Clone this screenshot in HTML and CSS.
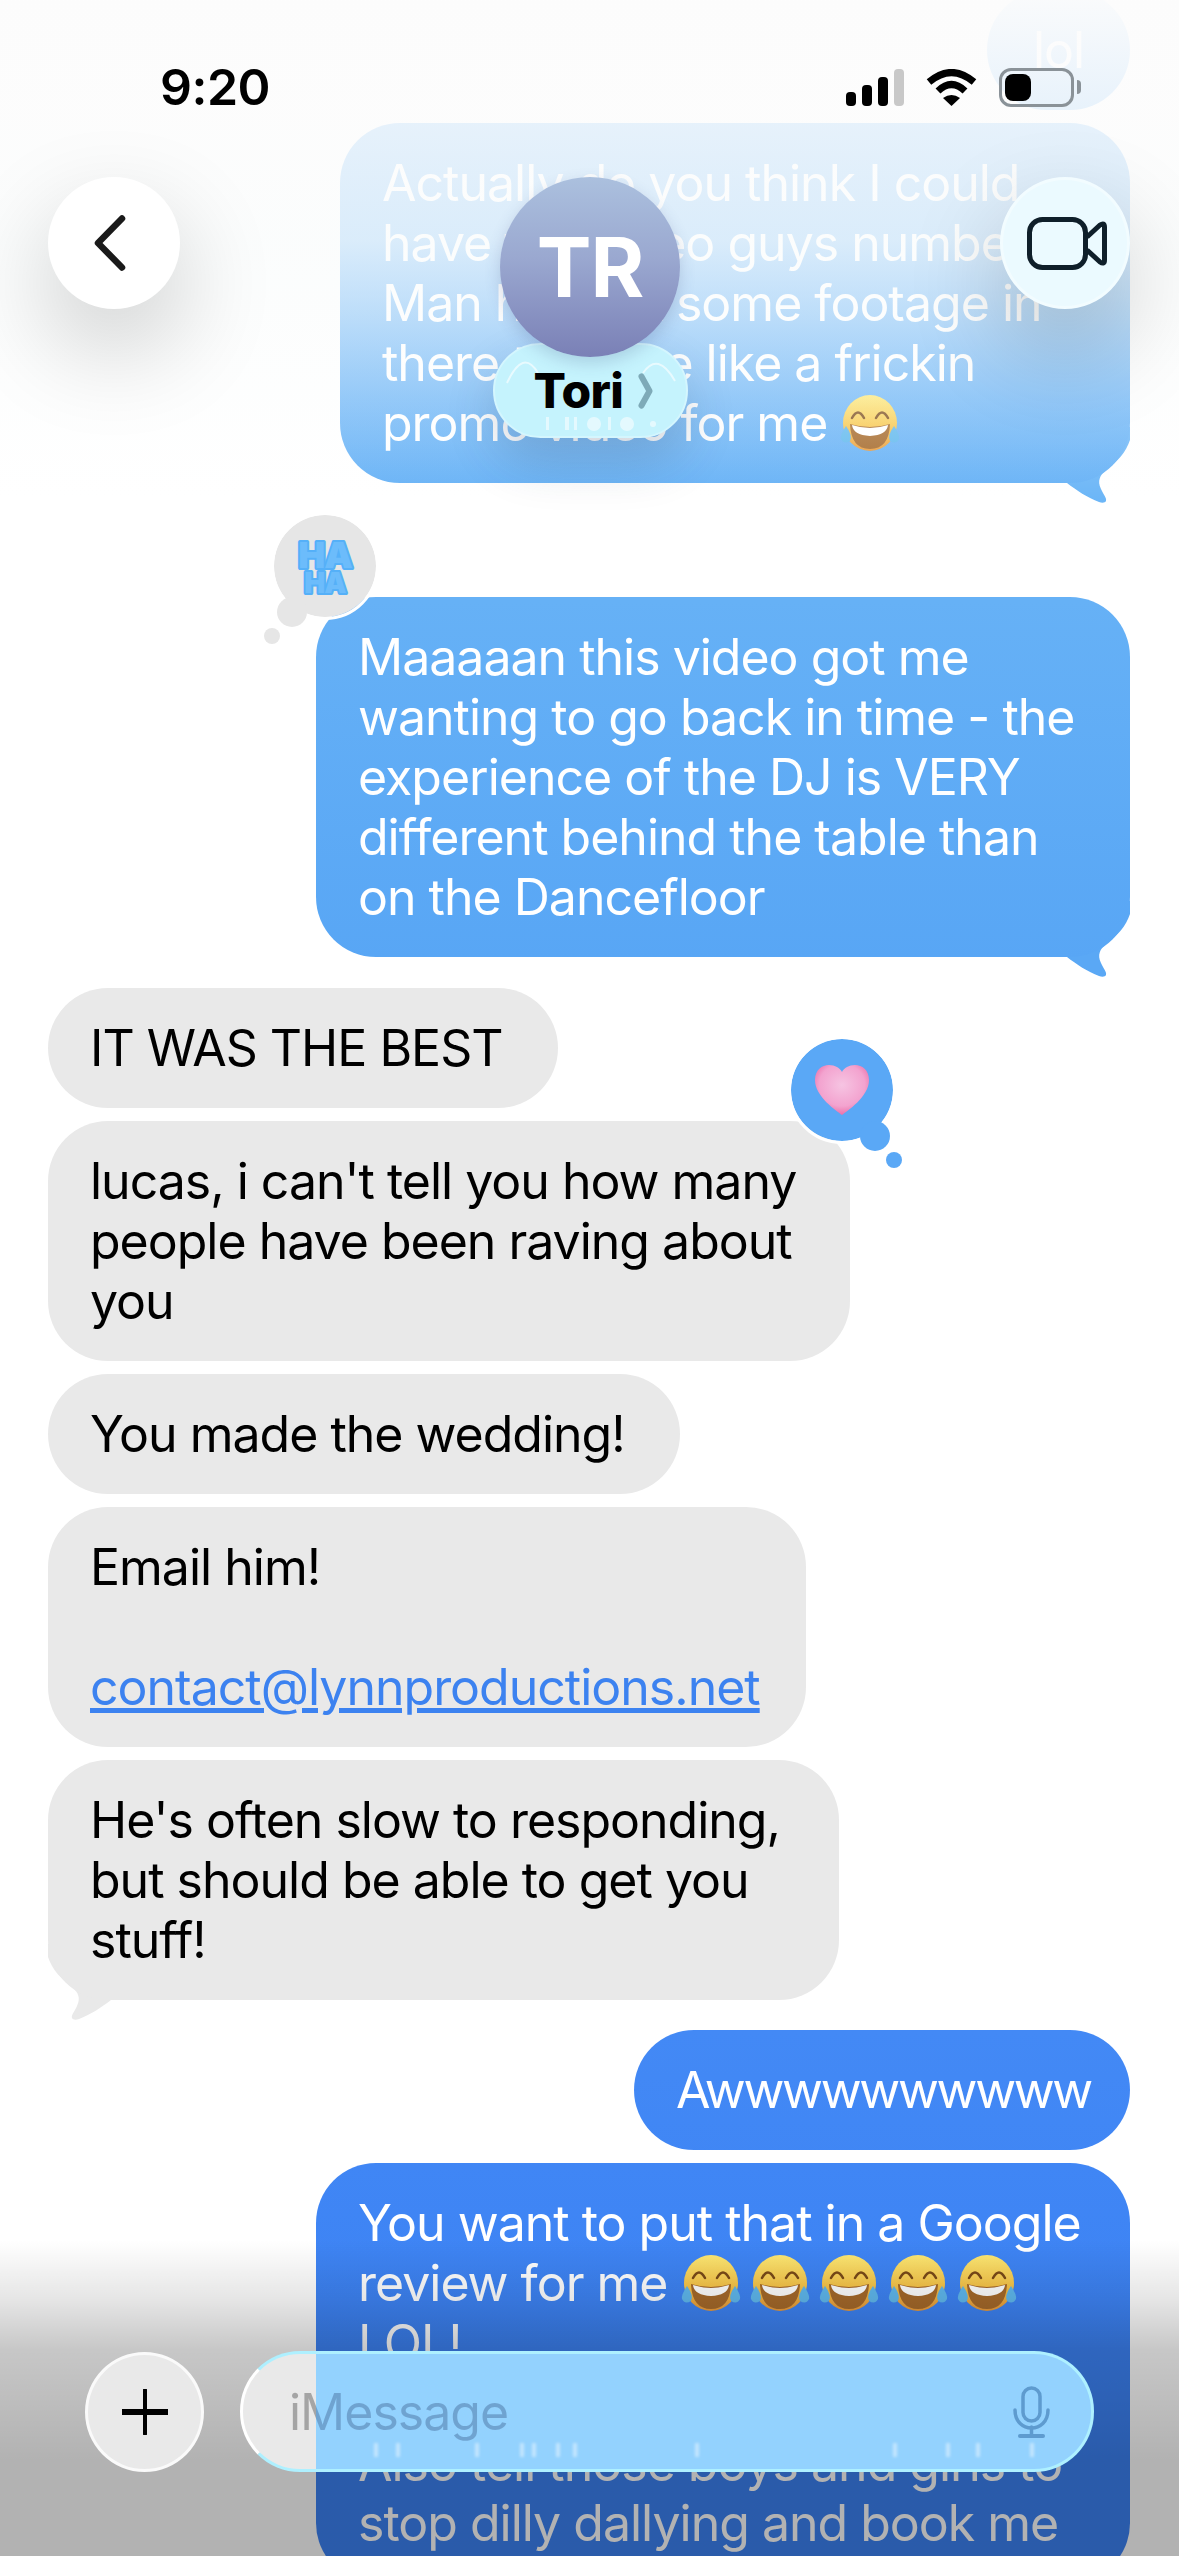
FILE: index.html
```html
<!DOCTYPE html>
<html lang="en">
<head>
    <meta charset="UTF-8">
    <meta name="viewport" content="width=device-width, initial-scale=1.0">
    <title>Tori</title>
    <link rel="stylesheet" href="styles.css">
</head>
<body>
    <svg class="defs" width="0" height="0">
        <defs>
            <linearGradient id="face" x1="0" y1="0" x2="0" y2="1">
                <stop offset="0" stop-color="#fde873"/>
                <stop offset="0.55" stop-color="#f8c64a"/>
                <stop offset="1" stop-color="#e8983a"/>
            </linearGradient>
            <radialGradient id="pink" cx="0.5" cy="0.4" r="0.65">
                <stop offset="0" stop-color="#f6c4e2"/>
                <stop offset="0.65" stop-color="#f3a3cf"/>
                <stop offset="1" stop-color="#e9619f"/>
            </radialGradient>
            <symbol id="joy" viewBox="0 0 60 58">
                <ellipse cx="30" cy="28" rx="27" ry="28" fill="url(#face)"/>
                <path d="M12 23 Q18 12 24 23 M36 23 Q42 12 48 23" fill="none" stroke="#7a4a18" stroke-width="2.500" stroke-linecap="round"/>
                <path d="M10 29 Q30 35 50 29 Q49 54 30 54 Q11 54 10 29Z" fill="#a5692a"/>
                <path d="M12 30 Q30 36 48 30 Q47 40 30 41 Q13 40 12 30Z" fill="#fff"/>
                <path d="M6 31 Q0 40 1 44 Q4 50 10 46 Q13 41 6 31Z M54 31 Q60 40 59 44 Q56 50 50 46 Q47 41 54 31Z" fill="#5fb8ee"/>
            </symbol>
            <symbol id="tail" viewBox="0 0 72 76">
                <path d="M0 0 H72 V13 C68 25 60 34 48 43 C42 48 39 54 43 62 C45 67 49 71 48 74 C47 76 44 76 41 75 C30 71 18 63 9 56 H0Z"/>
            </symbol>
        </defs>
    </svg>

    <div class="phone">
        <div class="thread">
            <div class="bubble sent lol">lol</div>

            <div class="bubble sent w790 after-gap">
                Actually do you think I could<br>
                have the video guys number<br>
                Man he shot some footage in<br>
                there to make like a frickin<br>
                promo video for me <svg class="emoji"><use href="#joy"/></svg>
                <svg class="tail tail-top"><use href="#tail"/></svg>
            </div>

            <div class="bubble sent w814">
                Maaaaan this video got me<br>
                wanting to go back in time - the<br>
                experience of the DJ is VERY<br>
                different behind the table than<br>
                on the Dancefloor
                <svg class="tail"><use href="#tail"/></svg>
                <div class="react react-haha">
                    <span class="dot-big"></span>
                    <span class="dot-small"></span>
                    <svg class="haha" viewBox="0 0 80 80">
                        <text class="haha-top" x="40" y="42" text-anchor="middle">HA</text>
                        <text class="haha-low" x="40" y="67" text-anchor="middle">HA</text>
                    </svg>
                </div>
            </div>

            <div class="bubble got w510">IT WAS THE BEST</div>

            <div class="bubble got w802">
                lucas, i can't tell you how many<br>
                people have been raving about<br>
                you
                <div class="react react-heart">
                    <span class="dot-big"></span>
                    <span class="dot-small"></span>
                    <svg class="heart" viewBox="0 0 54 50"><path d="M27 50 C22 46 0 32 0 15 C0 5 7 0 14 0 C20 0 25 3 27 7 C29 3 34 0 40 0 C47 0 54 5 54 15 C54 32 32 46 27 50Z" fill="url(#pink)"/></svg>
                </div>
            </div>

            <div class="bubble got w632">You made the wedding!</div>

            <div class="bubble got w758">
                Email him!<br>
                <br>
                <a class="mail" href="#">contact@lynnproductions.net</a>
            </div>

            <div class="bubble got w791">
                He's often slow to responding,<br>
                but should be able to get you<br>
                stuff!
                <svg class="tail tail-left"><use href="#tail"/></svg>
            </div>

            <div class="bubble sent w496 top-gap aww">Awwwwwwwwww</div>

            <div class="bubble sent w814">
                You want to put that in a Google<br>
                review for me <svg class="emoji"><use href="#joy"/></svg><svg class="emoji"><use href="#joy"/></svg><svg class="emoji"><use href="#joy"/></svg><svg class="emoji"><use href="#joy"/></svg><svg class="emoji"><use href="#joy"/></svg><br>
                LOL!<br>
                <br>
                Also tell those boys and girls to<br>
                stop dilly dallying and book me
            </div>
        </div>

        <div class="fade-top"></div>
        <div class="fade-bottom"></div>

        <div class="status">
            <span class="time">9:20</span>
            <div class="status-icons">
                <svg class="signal" viewBox="0 0 58 37">
                    <rect x="0" y="23" width="10" height="14" rx="4" fill="#000"/>
                    <rect x="16" y="16" width="10" height="21" rx="4" fill="#000"/>
                    <rect x="32" y="8" width="10" height="29" rx="4" fill="#000"/>
                    <rect x="48" y="0" width="10" height="37" rx="4" fill="#c8c8c8"/>
                </svg>
                <svg class="wifi" viewBox="0 0 51 37">
                    <path d="M3 13 Q25.5 -6 48 13" fill="none" stroke="#000" stroke-width="7"/>
                    <path d="M12 22 Q25.5 9 39 22" fill="none" stroke="#000" stroke-width="7"/>
                    <path d="M17 29 Q25.5 23 34 29 L25.5 37Z" fill="#000"/>
                </svg>
                <div class="battery"><span class="battery-fill"></span></div>
                <span class="battery-nub"></span>
            </div>
        </div>

        <div class="nav">
            <button class="round back">
                <svg class="chevron" viewBox="0 0 32 56"><path d="M28 3.500 L4 28 L28 52.500" fill="none" stroke="#1a1a1a" stroke-width="6.500" stroke-linecap="round" stroke-linejoin="round"/></svg>
            </button>
            <div class="contact">
                <div class="avatar">TR</div>
                <div class="name">
                    <svg class="glass" viewBox="0 0 195 95">
                        <path d="M14 40 Q30 5 45 30 M150 30 Q165 8 182 38" fill="none" stroke="#fff" stroke-width="2" opacity=".6"/>
                        <g fill="#fff" opacity=".55">
                            <rect x="53" y="74" width="3" height="13"/>
                            <rect x="72" y="74" width="4" height="13"/>
                            <rect x="81" y="74" width="3" height="13"/>
                            <circle cx="101" cy="81" r="7"/>
                            <rect x="115" y="74" width="3" height="13"/>
                            <circle cx="134" cy="81" r="7"/>
                            <circle cx="160" cy="81" r="3"/>
                        </g>
                    </svg>
                    <span class="name-text">Tori</span>
                    <svg class="name-arrow" viewBox="0 0 15 36"><path d="M3.500 3.500 L11.500 18 L3.500 32.500" fill="none" stroke="#7eaab8" stroke-width="6" stroke-linecap="round" stroke-linejoin="round"/></svg>
                </div>
            </div>
            <button class="round video">
                <svg class="video-icon" viewBox="0 0 80 53"><rect x="2.5" y="2.5" width="56" height="48" rx="13" fill="none" stroke="#0f1f2a" stroke-width="5"/><path d="M60 20 L73 8 Q77.500 5 77.500 10 V43 Q77.500 48 73 45 L60 33" fill="none" stroke="#0f1f2a" stroke-width="5" stroke-linejoin="round"/></svg>
            </button>
        </div>

        <div class="compose">
            <button class="plus">
                <svg class="plus-icon" viewBox="0 0 46 46"><path d="M23 1 V45" stroke="#000" stroke-width="4" stroke-linecap="round"/><path d="M1 23 H45" stroke="#000" stroke-width="6" stroke-linecap="round"/></svg>
            </button>
            <div class="input">
                <span class="placeholder">iMessage</span>
                <svg class="bits" viewBox="0 0 854 14">
                    <g fill="#fff" opacity=".45">
                        <rect x="134" width="4" height="14"/><rect x="156" width="4" height="14"/>
                        <rect x="235" width="4" height="14"/><rect x="280" width="4" height="14"/>
                        <rect x="292" width="4" height="14"/><rect x="316" width="4" height="14"/>
                        <rect x="333" width="4" height="14"/><rect x="455" width="4" height="14"/>
                        <rect x="653" width="4" height="14"/><rect x="706" width="4" height="14"/>
                        <rect x="736" width="4" height="14"/><rect x="790" width="4" height="14"/>
                    </g>
                </svg>
                <svg class="mic" viewBox="0 0 37 52" fill="none" stroke="#5e9bcf" stroke-width="3.500" stroke-linecap="round">
                    <rect x="10" y="2" width="17" height="33" rx="8.500"/>
                    <path d="M2 24 C2 48 35 48 35 24"/>
                    <path d="M18.500 41 V49"/>
                    <path d="M7 50 H30" stroke-width="4"/>
                </svg>
            </div>
        </div>
    </div>
</body>
</html>
```

FILE: styles.css
```css
* { box-sizing: border-box; }
html, body { margin: 0; padding: 0; }
body { background: #fff; font-family: Inter, "Noto Sans", sans-serif; }
.defs { position: absolute; }

.phone { position: relative; z-index: 0; width: 1179px; height: 2556px; overflow: hidden; background: #fff; }

/* messages */
.thread { display: flex; flex-direction: column; gap: 13px; margin-top: -10px; padding: 0 49px 0 48px; }
.bubble { position: relative; width: fit-content; padding: 30px 42px; border-radius: 60px; font-size: 50px; line-height: 60px; letter-spacing: -1px; white-space: nowrap; }
.sent { align-self: flex-end; color: #fff; background: linear-gradient(180deg, #6cb6f7 0, #66b1f6 600px, #58a6f5 960px, #4389f5 2030px, #3c82f4 2350px) fixed; }
.got { align-self: flex-start; color: #000; background: #e9e9e9; }
.lol { width: 143px; text-align: center; padding-left: 0; padding-right: 0; }
.aww { letter-spacing: -2.3px; }
.after-gap { margin-bottom: 101px; }
.w790 { width: 790px; }
.w814 { width: 814px; }
.w510 { width: 510px; margin-top: 18px; }
.w802 { width: 802px; }
.w632 { width: 632px; }
.w758 { width: 758px; }
.w791 { width: 791px; }
.w496 { width: 496px; }
.top-gap { margin-top: 17px; }
.mail { color: #3c82f0; }

.emoji { width: 60px; height: 58px; vertical-align: -12px; margin-right: 9px; }
.tail { position: absolute; z-index: -1; right: 0; bottom: -20px; width: 72px; height: 76px; fill: #5aa8f5; }
.tail-top { fill: #6cb6f7; }
.tail-left { right: auto; left: 0; fill: #e9e9e9; transform: scaleX(-1); }

/* tapback reactions */
.react { position: absolute; width: 102px; height: 102px; border-radius: 50%; display: flex; align-items: center; justify-content: center; }
.react-haha { left: -42px; top: -82px; background: #e6e6e6; outline: 3px solid #fff; }
.react-heart { left: 743px; top: -82px; background: #5aa8f6; outline: 3px solid #fff; }
.dot-big, .dot-small { position: absolute; border-radius: 50%; background: inherit; }
.dot-big { width: 30px; height: 30px; }
.dot-small { width: 16px; height: 16px; }
.react-haha .dot-big { left: 3px; top: 82px; }
.react-haha .dot-small { left: -10px; top: 113px; }
.react-heart .dot-big { left: 69px; top: 82px; }
.react-heart .dot-small { left: 95px; top: 113px; }
.haha { position: relative; width: 80px; height: 80px; }
.haha text { font-weight: 900; letter-spacing: -1px; fill: #6cbcfb; stroke: #55b0f8; stroke-width: 4px; stroke-linejoin: round; paint-order: stroke; }
.haha-top { font-size: 36px; }
.haha-low { font-size: 28px; }
.heart { position: relative; width: 54px; height: 50px; }

/* soft fades above the thread */
.fade-top { position: absolute; left: 0; right: 0; top: 0; height: 500px; pointer-events: none; background: linear-gradient(180deg, rgba(252,252,252,.98) 0, rgba(252,252,252,.86) 110px, rgba(250,252,252,.78) 240px, rgba(250,252,252,.62) 300px, rgba(250,252,252,.3) 400px, rgba(250,252,252,.06) 480px, rgba(250,252,252,0) 500px); }
.fade-bottom { position: absolute; left: 0; right: 0; bottom: 0; height: 316px; pointer-events: none; background: linear-gradient(180deg, rgba(0,0,0,0) 0, rgba(0,0,0,.1) 60px, rgba(0,0,0,.22) 110px, rgba(0,0,0,.3) 220px, rgba(0,0,0,.3) 100%); }

/* status bar */
.status { position: absolute; left: 0; right: 0; top: 62px; display: flex; justify-content: space-between; align-items: center; padding: 0 98px 0 160px; height: 50px; }
.time { font-size: 50px; font-weight: 600; letter-spacing: -0.5px; color: #000; }
.status-icons { display: flex; align-items: center; }
.signal { width: 58px; height: 37px; margin-right: 22px; }
.wifi { width: 51px; height: 37px; margin-right: 22px; }
.battery { width: 75px; height: 39px; border: 3px solid #8a9298; border-radius: 12px; padding: 3px; }
.battery-fill { display: block; width: 26px; height: 27px; background: #000; border-radius: 8px; }
.battery-nub { width: 4px; height: 14px; margin-left: 3px; background: #8a9298; border-radius: 0 4px 4px 0; }

/* nav */
.nav { position: absolute; left: 48px; right: 49px; top: 177px; display: flex; justify-content: space-between; align-items: flex-start; }
.round { width: 132px; height: 132px; padding: 0; border: 0; border-radius: 50%; display: flex; align-items: center; justify-content: center; box-shadow: 0 40px 100px rgba(0,0,0,.2); }
.back { background: #fff; }
.video { width: 130px; background: #ebfaff; border: 3px solid #f2fcff; }
.chevron { width: 32px; height: 56px; margin-right: 8px; }
.video-icon { width: 80px; height: 53px; margin-left: 3px; }
.contact { display: flex; flex-direction: column; align-items: center; }
.avatar { position: relative; z-index: 1; width: 180px; height: 180px; border-radius: 50%; display: flex; align-items: center; justify-content: center; color: #fff; font-size: 82px; font-weight: 700; letter-spacing: -1px; background: linear-gradient(180deg, #abc0de 0, #9aa8d0 45%, #7a80b6 100%); box-shadow: 0 6px 16px rgba(60,70,120,.2); }
.name { position: relative; width: 195px; height: 95px; margin-top: -14px; border-radius: 48px; display: flex; align-items: center; justify-content: flex-start; padding: 0 0 0 39px; background: #c5f3fd; border: 2px solid #d4f6fe; box-shadow: 0 24px 50px rgba(40,60,90,.2); }
.glass { position: absolute; left: -2px; top: -2px; width: 195px; height: 95px; }
.name-text { position: relative; font-size: 48px; font-weight: 800; letter-spacing: -0.7px; color: #000; }
.name-arrow { position: relative; width: 15px; height: 36px; margin-left: 15px; }

/* compose bar */
.compose { position: absolute; left: 85px; top: 2351px; display: flex; gap: 36px; align-items: center; }
.plus { width: 119px; height: 120px; padding: 0; border: 3px solid #fafafa; border-radius: 50%; background: #e9e9e9; display: flex; align-items: center; justify-content: center; }
.plus-icon { width: 46px; height: 46px; }
.input { position: relative; width: 854px; height: 121px; border: 3px solid #aef0ff; border-left-color: #fff; border-radius: 60px; display: flex; align-items: center; justify-content: space-between; padding: 0 41px 0 46px; background: linear-gradient(90deg, #e9e9e9 73px, #93d2fe 73px); }
.placeholder { font-size: 50px; letter-spacing: -1px; color: transparent; background: linear-gradient(90deg, #a5a5a5 27px, #6fa3d0 27px); -webkit-background-clip: text; background-clip: text; }
.bits { position: absolute; left: -3px; top: 89px; width: 854px; height: 14px; filter: blur(1.500px); }
.mic { width: 37px; height: 52px; }
```
